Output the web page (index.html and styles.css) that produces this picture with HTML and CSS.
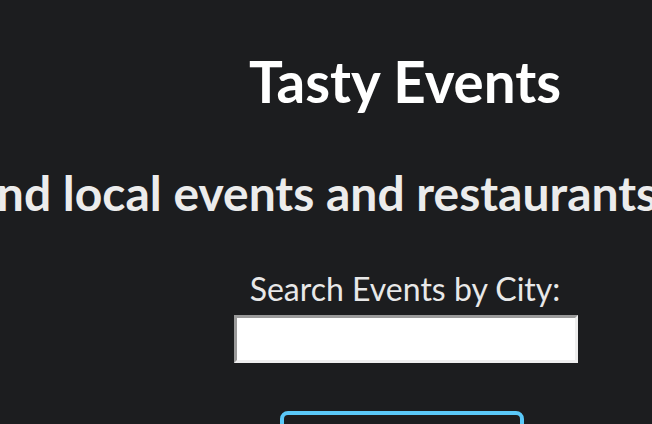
FILE: index.html
```html
<!DOCTYPE html>
<html lang="en">
<head>
<meta charset="utf-8">
<title>Tasty Events</title>
<link rel="stylesheet" href="styles.css">
</head>
<body>
<main class="page">
  <h1 class="title">Tasty Events</h1>
  <h2 class="subtitle">Find local events and restaurants near you</h2>
  <form class="search">
    <label class="search-label" for="city">Search Events by City:</label>
    <input class="search-input" id="city" type="text">
    <button class="search-button" type="submit">Search</button>
  </form>
</main>
</body>
</html>
```
FILE: styles.css
```css
html, body {
  margin: 0;
  padding: 0;
  background: #1c1d1f;
  overflow: hidden;
}
body {
  font-family: Lato, "Open Sans", sans-serif;
  color: #ececec;
}
.page {
  width: 810px;
  display: flex;
  flex-direction: column;
  align-items: center;
  padding-top: 43px;
}
.title {
  margin: 0;
  font-size: 56.5px;
  font-weight: 700;
  line-height: 76px;
  color: #ffffff;
}
.subtitle {
  margin: 44px 0 0;
  font-size: 48px;
  font-weight: 700;
  line-height: 60px;
  white-space: nowrap;
  color: #ececec;
}
.search {
  margin-top: 46px;
  display: flex;
  flex-direction: column;
  align-items: center;
}
.search-label {
  font-size: 32px;
  line-height: 40px;
  color: #e8e8e8;
}
.search-input {
  margin: 6px 0 0 2px;
  box-sizing: border-box;
  width: 344px;
  height: 48px;
  border-style: solid;
  border-width: 3px;
  border-color: #9a9a9a #eeeeee #eeeeee #9a9a9a;
  background: #ffffff;
  font-size: 24px;
}
.search-button {
  margin: 48px 6px 0 0;
  box-sizing: border-box;
  width: 244px;
  height: 60px;
  border: 4px solid #5ac8f8;
  border-radius: 8px;
  background: transparent;
  color: #ffffff;
  font-family: Lato, sans-serif;
  font-size: 28px;
}
```
